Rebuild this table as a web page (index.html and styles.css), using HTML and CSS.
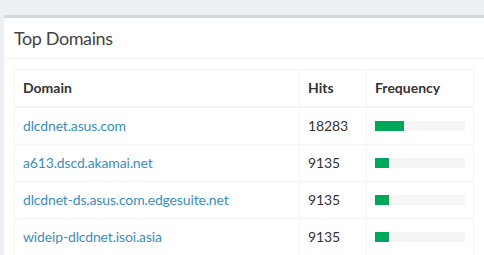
FILE: index.html
```html
<!DOCTYPE html>
<html>
<head>
<meta charset="utf-8">
<link rel="stylesheet" href="styles.css">
</head>
<body>
<div class="content">
  <div class="box">
    <div class="box-header"><h3 class="box-title">Top Domains</h3></div>
    <div class="box-body">
      <table class="table">
        <thead>
          <tr><th class="c-domain">Domain</th><th class="c-hits">Hits</th><th class="c-freq">Frequency</th></tr>
        </thead>
        <tbody>
          <tr><td><a href="#">dlcdnet.asus.com</a></td><td>18283</td><td><div class="progress"><div class="bar" style="width:32%"></div></div></td></tr>
          <tr><td><a href="#">a613.dscd.akamai.net</a></td><td>9135</td><td><div class="progress"><div class="bar" style="width:15.5%"></div></div></td></tr>
          <tr><td><a href="#">dlcdnet-ds.asus.com.edgesuite.net</a></td><td>9135</td><td><div class="progress"><div class="bar" style="width:15.5%"></div></div></td></tr>
          <tr><td><a href="#">wideip-dlcdnet.isoi.asia</a></td><td>9135</td><td><div class="progress"><div class="bar" style="width:15.5%"></div></div></td></tr>
        </tbody>
      </table>
    </div>
  </div>
</div>
</body>
</html>
```
FILE: styles.css
```css
html, body {
  margin: 0;
  padding: 0;
  background: #ecf0f5;
  font-family: Lato, "Liberation Sans", sans-serif;
  font-size: 14px;
  color: #333;
  overflow: hidden;
}
.content {
  padding: 15px 0 0 4px;
}
.box {
  width: 480px;
  background: #fff;
  border-top: 3px solid #d2d6de;
  border-radius: 3px 0 0 0;
}
.box-header {
  padding: 10px;
  border-bottom: 1px solid #f4f4f4;
}
.box-title {
  margin: 0;
  font-size: 18px;
  font-weight: 400;
  line-height: 20px;
  letter-spacing: -0.4px;
  color: #444;
}
.box-body {
  padding: 10px;
}
.table {
  width: 460px;
  border-collapse: collapse;
  border: 1px solid #f4f4f4;
}
.table th, .table td {
  border: 1px solid #f4f4f4;
  padding: 8px;
  line-height: 20px;
  text-align: left;
  vertical-align: top;
}
.table td {
  letter-spacing: -0.15px;
}
.table th {
  font-weight: 700;
  border-bottom-width: 2px;
}
.c-domain { width: 268px; }
.c-hits { width: 50px; }
a {
  color: #3c8dbc;
  text-decoration: none;
}
.progress {
  width: 90px;
  height: 10px;
  margin-top: 5px;
  background: #f5f5f5;
}
.bar {
  height: 10px;
  background: #00a65a;
}
```
